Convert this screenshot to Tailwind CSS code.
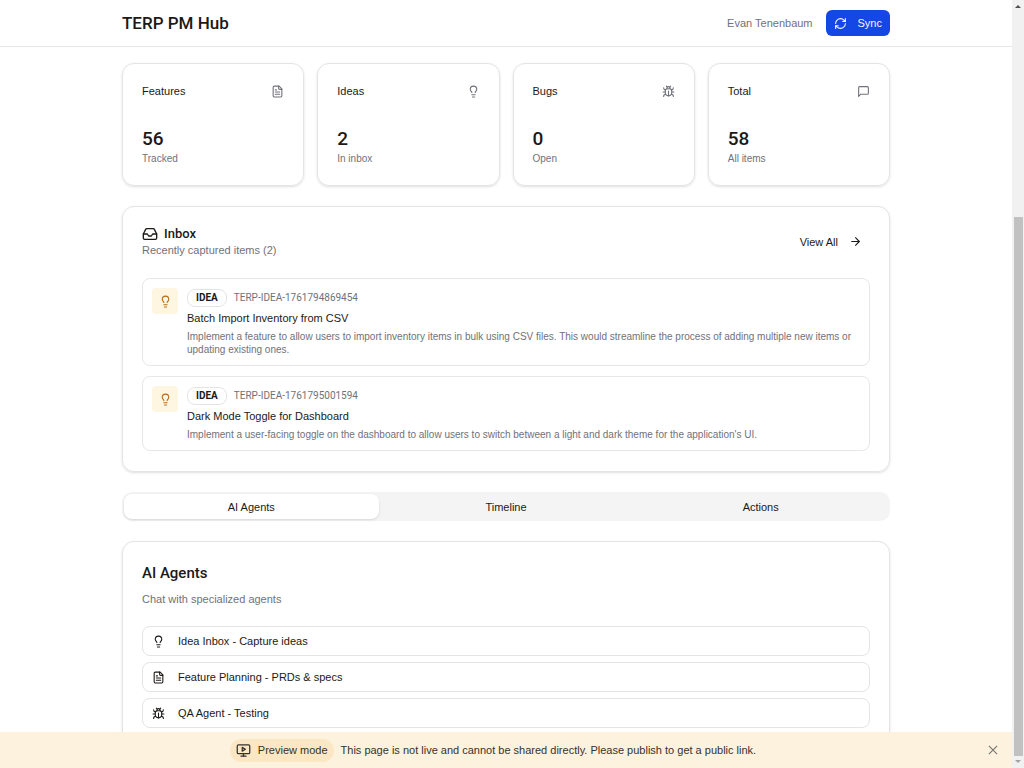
<!DOCTYPE html>
<html lang="en">
<head>
<meta charset="utf-8">
<meta name="viewport" content="width=device-width, initial-scale=1">
<title>TERP PM Hub</title>
<script src="https://cdn.jsdelivr.net/npm/@tailwindcss/browser@4"></script>
</head>
<body class="bg-white font-['Liberation_Sans',Arial,sans-serif] text-[11px] leading-4 text-[#1c1917]">
<svg class="hidden" aria-hidden="true">
  <symbol id="bulb" viewBox="0 0 24 24"><path d="M15 14c.2-1 .7-1.7 1.5-2.5 1-.9 1.5-2.2 1.5-3.5A6 6 0 0 0 6 8c0 1 .2 2.2 1.5 3.5.7.7 1.3 1.5 1.5 2.5"/><path d="M9 18h6"/><path d="M10 22h4"/></symbol>
  <symbol id="file" viewBox="0 0 24 24"><path d="M15 2H6a2 2 0 0 0-2 2v16a2 2 0 0 0 2 2h12a2 2 0 0 0 2-2V7Z"/><path d="M14 2v4a2 2 0 0 0 2 2h4"/><path d="M10 9H8"/><path d="M16 13H8"/><path d="M16 17H8"/></symbol>
  <symbol id="bug" viewBox="0 0 24 24"><path d="m8 2 1.88 1.88"/><path d="M14.12 3.88 16 2"/><path d="M9 7.13v-1a3.003 3.003 0 1 1 6 0v1"/><path d="M12 20c-3.3 0-6-2.7-6-6v-3a4 4 0 0 1 4-4h4a4 4 0 0 1 4 4v3c0 3.3-2.7 6-6 6"/><path d="M12 20v-9"/><path d="M6.53 9C4.6 8.8 3 7.1 3 5"/><path d="M6 13H2"/><path d="M3 21c0-2.1 1.7-3.9 3.8-4"/><path d="M20.97 5c0 2.1-1.6 3.8-3.5 4"/><path d="M22 13h-4"/><path d="M17.2 17c2.1.1 3.8 1.9 3.8 4"/></symbol>
</svg>
<div class="flex h-screen flex-col overflow-hidden">
  <div class="flex min-h-0 flex-1">
    <div class="flex min-w-0 flex-1 flex-col">
      <div class="min-h-0 flex-1 overflow-hidden">
        <header class="border-b border-[#e7e7e9]">
          <div class="mx-auto flex h-[46px] max-w-3xl items-center justify-between">
            <h1 class="font-[Roboto,sans-serif] text-[17px] font-medium">TERP PM Hub</h1>
            <div class="flex items-center gap-[13px]">
              <span class="text-[#71717a]">Evan Tenenbaum</span>
              <button class="flex h-[26px] items-center gap-[11px] rounded-md bg-[#1447e6] px-2 text-[#eff6ff]">
                <svg class="size-[13px] fill-none stroke-current stroke-2" viewBox="0 0 24 24" stroke-linecap="round" stroke-linejoin="round"><path d="M3 12a9 9 0 0 1 9-9 9.750 9.750 0 0 1 6.740 2.740L21 8"/><path d="M21 3v5h-5"/><path d="M21 12a9 9 0 0 1-9 9 9.750 9.750 0 0 1-6.740-2.740L3 16"/><path d="M8 16H3v5"/></svg>
                Sync
              </button>
            </div>
          </div>
        </header>
        <main class="mx-auto flex max-w-3xl flex-col gap-5 pt-4">
          <section class="grid grid-cols-4 gap-[13px]">
            <article class="flex flex-col gap-[27px] rounded-xl border border-[#e4e4e7] px-[19px] pt-[19px] pb-5 shadow-sm">
              <div class="flex items-center justify-between"><h2>Features</h2><svg class="size-[13px] fill-none stroke-[#71717a] stroke-2" stroke-linecap="round" stroke-linejoin="round"><use href="#file"/></svg></div>
              <div><p class="font-[Roboto,sans-serif] text-[19px] leading-[26px] font-medium">56</p><p class="text-[10px] leading-[13px] text-[#71717a]">Tracked</p></div>
            </article>
            <article class="flex flex-col gap-[27px] rounded-xl border border-[#e4e4e7] px-[19px] pt-[19px] pb-5 shadow-sm">
              <div class="flex items-center justify-between"><h2>Ideas</h2><svg class="size-[13px] fill-none stroke-[#71717a] stroke-2" stroke-linecap="round" stroke-linejoin="round"><use href="#bulb"/></svg></div>
              <div><p class="font-[Roboto,sans-serif] text-[19px] leading-[26px] font-medium">2</p><p class="text-[10px] leading-[13px] text-[#71717a]">In inbox</p></div>
            </article>
            <article class="flex flex-col gap-[27px] rounded-xl border border-[#e4e4e7] px-[19px] pt-[19px] pb-5 shadow-sm">
              <div class="flex items-center justify-between"><h2>Bugs</h2><svg class="size-[13px] fill-none stroke-[#71717a] stroke-2" stroke-linecap="round" stroke-linejoin="round"><use href="#bug"/></svg></div>
              <div><p class="font-[Roboto,sans-serif] text-[19px] leading-[26px] font-medium">0</p><p class="text-[10px] leading-[13px] text-[#71717a]">Open</p></div>
            </article>
            <article class="flex flex-col gap-[27px] rounded-xl border border-[#e4e4e7] px-[19px] pt-[19px] pb-5 shadow-sm">
              <div class="flex items-center justify-between"><h2>Total</h2><svg class="size-[13px] fill-none stroke-[#71717a] stroke-2" viewBox="0 0 24 24" stroke-linecap="round" stroke-linejoin="round"><path d="M21 15a2 2 0 0 1-2 2H7l-4 4V5a2 2 0 0 1 2-2h14a2 2 0 0 1 2 2z"/></svg></div>
              <div><p class="font-[Roboto,sans-serif] text-[19px] leading-[26px] font-medium">58</p><p class="text-[10px] leading-[13px] text-[#71717a]">All items</p></div>
            </article>
          </section>

          <section class="rounded-xl border border-[#e4e4e7] px-[19px] pt-[18px] pb-5 shadow-sm">
            <div class="flex items-center justify-between">
              <div>
                <h2 class="flex items-center gap-1.5 font-[Roboto,sans-serif] text-[13px] leading-[17px] font-medium"><svg class="size-4 fill-none stroke-current stroke-2" viewBox="0 0 24 24" stroke-linecap="round" stroke-linejoin="round"><path d="M22 12h-6l-2 3h-4l-2-3H2"/><path d="M5.450 5.110 2 12v6a2 2 0 0 0 2 2h16a2 2 0 0 0 2-2v-6l-3.450-6.890A2 2 0 0 0 16.760 4H7.240a2 2 0 0 0-1.790 1.110z"/></svg>Inbox</h2>
                <p class="text-[#71717a]">Recently captured items (2)</p>
              </div>
              <button class="flex h-[26px] items-center gap-[11px] px-2">View All<svg class="size-[13px] fill-none stroke-current stroke-2" viewBox="0 0 24 24" stroke-linecap="round" stroke-linejoin="round"><path d="M5 12h14"/><path d="m12 5 7 7-7 7"/></svg></button>
            </div>
            <ul class="mt-5 flex flex-col gap-2.5">
              <li class="flex gap-[9px] rounded-lg border border-[#e7e7e9] p-[9px]">
                <span class="grid size-[26px] shrink-0 place-items-center rounded-sm bg-[#fef6e0]"><svg class="size-[13px] fill-none stroke-[#bb6a10] stroke-2" stroke-linecap="round" stroke-linejoin="round"><use href="#bulb"/></svg></span>
                <div class="pt-px">
                  <div class="flex items-center gap-[7px] font-[Roboto,sans-serif] text-[10px]"><span class="flex h-[18px] items-center rounded-lg border border-[#e4e4e7] px-2 font-bold">IDEA</span><span class="text-[#71717a]">TERP-IDEA-1761794869454</span></div>
                  <h3 class="mt-[3px]">Batch Import Inventory from CSV</h3>
                  <p class="mt-1 text-[10px] leading-[13px] text-[#71717a]">Implement a feature to allow users to import inventory items in bulk using CSV files. This would streamline the process of adding multiple new items or updating existing ones.</p>
                </div>
              </li>
              <li class="flex gap-[9px] rounded-lg border border-[#e7e7e9] p-[9px]">
                <span class="grid size-[26px] shrink-0 place-items-center rounded-sm bg-[#fef6e0]"><svg class="size-[13px] fill-none stroke-[#bb6a10] stroke-2" stroke-linecap="round" stroke-linejoin="round"><use href="#bulb"/></svg></span>
                <div class="pt-px">
                  <div class="flex items-center gap-[7px] font-[Roboto,sans-serif] text-[10px]"><span class="flex h-[18px] items-center rounded-lg border border-[#e4e4e7] px-2 font-bold">IDEA</span><span class="text-[#71717a]">TERP-IDEA-1761795001594</span></div>
                  <h3 class="mt-[3px]">Dark Mode Toggle for Dashboard</h3>
                  <p class="mt-1 text-[10px] leading-[13px] text-[#71717a]">Implement a user-facing toggle on the dashboard to allow users to switch between a light and dark theme for the application's UI.</p>
                </div>
              </li>
            </ul>
          </section>

          <div role="tablist" class="grid h-[29px] grid-cols-3 rounded-[10px] bg-[#f4f4f5] p-0.5">
            <button role="tab" aria-selected="true" class="rounded-lg bg-white shadow-sm">AI Agents</button>
            <button role="tab" aria-selected="false">Timeline</button>
            <button role="tab" aria-selected="false">Actions</button>
          </div>

          <section class="rounded-xl border border-[#e4e4e7] p-[19px] shadow-sm">
            <h2 class="font-[Roboto,sans-serif] text-[15px] leading-6 font-medium">AI Agents</h2>
            <p class="mt-1.5 text-[#71717a]">Chat with specialized agents</p>
            <div class="mt-[19px] flex flex-col gap-1.5">
              <button class="flex h-[30px] items-center gap-[13px] rounded-lg border border-[#e4e4e7] px-[9px]"><svg class="size-[13px] fill-none stroke-current stroke-2" stroke-linecap="round" stroke-linejoin="round"><use href="#bulb"/></svg>Idea Inbox - Capture ideas</button>
              <button class="flex h-[30px] items-center gap-[13px] rounded-lg border border-[#e4e4e7] px-[9px]"><svg class="size-[13px] fill-none stroke-current stroke-2" stroke-linecap="round" stroke-linejoin="round"><use href="#file"/></svg>Feature Planning - PRDs &amp; specs</button>
              <button class="flex h-[30px] items-center gap-[13px] rounded-lg border border-[#e4e4e7] px-[9px]"><svg class="size-[13px] fill-none stroke-current stroke-2" stroke-linecap="round" stroke-linejoin="round"><use href="#bug"/></svg>QA Agent - Testing</button>
            </div>
          </section>
        </main>
      </div>
      <aside class="flex h-9 shrink-0 items-center bg-[#fcf2de] pr-3 text-[#34322d]">
        <div class="flex flex-1 items-center justify-center gap-[7px]">
          <span class="flex h-[23px] items-center gap-[7px] rounded-full bg-[#fbe7c3] px-1.5"><svg class="size-[15px] fill-none stroke-current stroke-2" viewBox="0 0 24 24" stroke-linecap="round" stroke-linejoin="round"><rect x="2" y="3" width="20" height="14" rx="2"/><path d="m10 7 5 3-5 3Z"/><path d="M12 17v4"/><path d="M8 21h8"/></svg>Preview mode</span>
          <span>This page is not live and cannot be shared directly. Please publish to get a public link.</span>
        </div>
        <button aria-label="Close"><svg class="size-[14px] fill-none stroke-[#77746d] stroke-2" viewBox="0 0 24 24"><path d="m5 5 14 14M19 5 5 19"/></svg></button>
      </aside>
    </div>
    <div class="flex w-3 shrink-0 flex-col items-center bg-[#f1f1f1]" aria-hidden="true">
      <svg class="h-3 w-3 fill-[#505050]" viewBox="0 0 12 12"><path d="m3 8 3-3 3 3z"/></svg>
      <div class="mt-[205px] w-[9px] flex-1 bg-[#c1c1c1]"></div>
      <svg class="h-3 w-3 fill-[#a3a3a3]" viewBox="0 0 12 12"><path d="m3 4 3 3 3-3z"/></svg>
    </div>
  </div>
</div>
</body>
</html>
